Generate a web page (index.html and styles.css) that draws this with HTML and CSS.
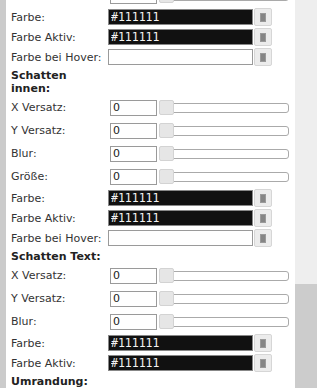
FILE: index.html
```html
<!DOCTYPE html>
<html lang="de">
<head>
    <meta charset="UTF-8">
    <meta name="viewport" content="width=device-width, initial-scale=1.0">
    <title>Schatten</title>
    <link rel="stylesheet" href="styles.css">
</head>
<body>
    <div class="window">
        <div class="panel">
            <div class="rows">
                <div class="row slider-row">
                    <div class="row-label"></div>
                    <input class="num" type="text" value="0">
                    <div class="slider"><span class="slider-handle"></span></div>
                </div>
                <div class="row color-row">
                    <div class="row-label">Farbe:</div>
                    <input class="color dark" type="text" value="#111111">
                    <button class="pick"><span></span></button>
                </div>
                <div class="row color-row">
                    <div class="row-label">Farbe Aktiv:</div>
                    <input class="color dark" type="text" value="#111111">
                    <button class="pick"><span></span></button>
                </div>
                <div class="row color-row">
                    <div class="row-label">Farbe bei Hover:</div>
                    <input class="color" type="text" value="">
                    <button class="pick"><span></span></button>
                </div>

                <div class="row head-row">
                    <div class="row-label">Schatten innen:</div>
                </div>
                <div class="row slider-row">
                    <div class="row-label">X Versatz:</div>
                    <input class="num" type="text" value="0">
                    <div class="slider"><span class="slider-handle"></span></div>
                </div>
                <div class="row slider-row">
                    <div class="row-label">Y Versatz:</div>
                    <input class="num" type="text" value="0">
                    <div class="slider"><span class="slider-handle"></span></div>
                </div>
                <div class="row slider-row">
                    <div class="row-label">Blur:</div>
                    <input class="num" type="text" value="0">
                    <div class="slider"><span class="slider-handle"></span></div>
                </div>
                <div class="row slider-row">
                    <div class="row-label">Größe:</div>
                    <input class="num" type="text" value="0">
                    <div class="slider"><span class="slider-handle"></span></div>
                </div>
                <div class="row color-row">
                    <div class="row-label">Farbe:</div>
                    <input class="color dark" type="text" value="#111111">
                    <button class="pick"><span></span></button>
                </div>
                <div class="row color-row">
                    <div class="row-label">Farbe Aktiv:</div>
                    <input class="color dark" type="text" value="#111111">
                    <button class="pick"><span></span></button>
                </div>
                <div class="row color-row">
                    <div class="row-label">Farbe bei Hover:</div>
                    <input class="color" type="text" value="">
                    <button class="pick"><span></span></button>
                </div>

                <div class="row head-row">
                    <div class="row-label">Schatten Text:</div>
                </div>
                <div class="row slider-row">
                    <div class="row-label">X Versatz:</div>
                    <input class="num" type="text" value="0">
                    <div class="slider"><span class="slider-handle"></span></div>
                </div>
                <div class="row slider-row">
                    <div class="row-label">Y Versatz:</div>
                    <input class="num" type="text" value="0">
                    <div class="slider"><span class="slider-handle"></span></div>
                </div>
                <div class="row slider-row">
                    <div class="row-label">Blur:</div>
                    <input class="num" type="text" value="0">
                    <div class="slider"><span class="slider-handle"></span></div>
                </div>
                <div class="row color-row">
                    <div class="row-label">Farbe:</div>
                    <input class="color dark" type="text" value="#111111">
                    <button class="pick"><span></span></button>
                </div>
                <div class="row color-row">
                    <div class="row-label">Farbe Aktiv:</div>
                    <input class="color dark" type="text" value="#111111">
                    <button class="pick"><span></span></button>
                </div>

                <div class="row head-row">
                    <div class="row-label">Umrandung:</div>
                </div>
            </div>
        </div>
        <div class="scrollbar">
            <div class="scroll-track"></div>
            <div class="scroll-thumb"></div>
        </div>
    </div>
</body>
</html>
```

FILE: styles.css
```css
* {
    margin: 0;
    padding: 0;
    box-sizing: border-box;
}

body {
    height: 388px;
    overflow: hidden;
    background: #fff;
    font-family: "DejaVu Sans", Verdana, sans-serif;
    font-size: 11px;
    color: #333;
}

.window {
    display: flex;
    height: 388px;
}

.panel {
    flex: 1;
    border-left: 6px solid #cbcbcb;
    padding-left: 5px;
    overflow: hidden;
}

.rows {
    margin-top: -16px;
}

.row {
    display: flex;
    align-items: center;
}

.row-label {
    width: 97px;
    flex: none;
    line-height: 13px;
}

.slider-row {
    height: 23px;
}

.color-row {
    height: 20px;
}

.head-row {
    padding: 2px 0 1px;
    font-weight: bold;
    color: #222;
}

input {
    font-family: inherit;
    font-size: 11px;
    height: 16px;
    border: 1px solid #9a9a9a;
    padding: 0 2px;
    outline: none;
    color: #222;
    background: #fff;
}

.num {
    width: 47px;
    margin-left: 2px;
}

.color {
    width: 145px;
}

.color.dark {
    background: #111;
    border-color: #888;
    color: #f2f2f2;
    font-family: "DejaVu Sans Mono", monospace;
    font-size: 11.5px;
}

.slider {
    position: relative;
    width: 130px;
    height: 10px;
    margin-left: 2px;
    border: 1px solid #aaa;
    border-radius: 3px;
    background: #fff;
}

.slider-handle {
    position: absolute;
    left: -1px;
    top: -4px;
    width: 15px;
    height: 15px;
    background: #e6e6e6;
    border: 1px solid #d3d3d3;
    border-radius: 2px;
}

.pick {
    width: 18px;
    height: 18px;
    margin-left: 1px;
    background: #ececec;
    border: 1px solid #d6d6d6;
    border-radius: 2px;
    display: flex;
    align-items: center;
    justify-content: center;
}

.pick span {
    width: 6px;
    height: 9px;
    background: #858585;
    border: 1px solid #9a9a9a;
}

.scrollbar {
    width: 22px;
    flex: none;
    display: flex;
    flex-direction: column;
}

.scroll-track {
    height: 284px;
    background: #eeeeee;
}

.scroll-thumb {
    flex: 1;
    background: #cccccc;
}
```
